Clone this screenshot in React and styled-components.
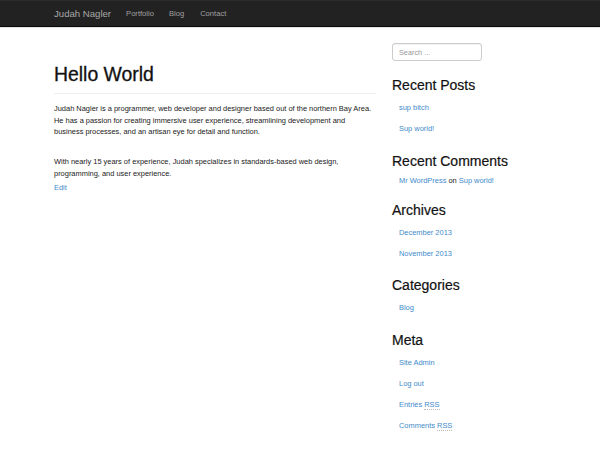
import React from "react";
import styled, { createGlobalStyle } from "styled-components";

const Global = createGlobalStyle`
  html, body { margin: 0; padding: 0; background: #fff; }
  body { font-family: "Liberation Sans", Arial, sans-serif; color: #333; }
  * { box-sizing: border-box; }
  a { color: #428bca; text-decoration: none; }
`;

const Navbar = styled.nav`
  height: 27px;
  background: #222;
  border-top: 1px solid #2c2c2c;
  border-bottom: 1px solid #0a0a0a;
  box-shadow: 0 1px 0 #e4e4e4;
`;

const NavInner = styled.div`
  width: 492px;
  margin: 0 auto;
  height: 100%;
  display: flex;
  align-items: center;
`;

const Brand = styled.a`
  font-size: 9.6px;
  margin-right: 15px;
  && { color: #a8a8a8; }
`;

const NavLink = styled.a`
  && { color: #a0a0a0; }
  font-size: 7.6px;
  margin-right: ${(p) => p.$mr}px;
`;

const Container = styled.div`
  width: 492px;
  margin: 0 auto;
  display: flex;
  gap: 16px;
`;

const Main = styled.main`
  width: 322px;
`;

const Header = styled.header`
  margin-top: 37px;
  padding-bottom: 8px;
  border-bottom: 1px solid #eee;
`;

const Title = styled.h1`
  margin: 0;
  font-size: 19.4px;
  line-height: 21px;
  font-weight: normal;
  color: #111;
  -webkit-text-stroke: 0.3px #111;
`;

const Para = styled.p`
  margin: ${(p) => p.$mt}px 0 0;
  font-size: 7.45px;
  line-height: 11.7px;
  color: #222;
`;

const EditLink = styled.a`
  display: block;
  margin-top: 2px;
  font-size: 7.45px;
  line-height: 11.7px;
`;

const Sidebar = styled.aside`
  width: 154px;
  padding-top: 16px;
`;

const Search = styled.input`
  display: block;
  width: 90px;
  height: 18px;
  border: 1px solid #ccc;
  border-radius: 3px;
  padding: 0 6px;
  font-family: "Liberation Sans", Arial, sans-serif;
  font-size: 7.3px;
  color: #555;
  box-shadow: inset 0 1px 1px rgba(0,0,0,0.06);
  &::placeholder { color: #999; }
`;

const WidgetTitle = styled.h3`
  margin: ${(p) => p.$mt}px 0 0;
  font-size: 14px;
  line-height: 16px;
  font-weight: normal;
  color: #111;
  -webkit-text-stroke: 0.2px #111;
`;

const List = styled.ul`
  list-style: none;
  margin: ${(p) => p.$mt}px 0 0;
  padding: 0 0 0 7px;
`;

const Item = styled.li`
  height: 21px;
  line-height: 21px;
  font-size: 7.45px;
  color: #222;
`;

const Abbr = styled.abbr`
  text-decoration: none;
  border-bottom: 1px dotted #bbb;
`;

const widgets = [
  { title: "Recent Posts", items: ["sup bitch", "Sup world!"] },
  {
    title: "Recent Comments",
    items: [
      <>
        <a href="#">Mr WordPress</a> on <a href="#">Sup world!</a>
      </>,
    ],
    tight: true,
  },
  { title: "Archives", items: ["December 2013", "November 2013"] },
  { title: "Categories", items: ["Blog"] },
  {
    title: "Meta",
    items: [
      "Site Admin",
      "Log out",
      <a href="#">Entries <Abbr>RSS</Abbr></a>,
      <a href="#">Comments <Abbr>RSS</Abbr></a>,
    ],
  },
];

export default function App() {
  return (
    <>
      <Global />
      <Navbar>
        <NavInner>
          <Brand href="#">Judah Nagler</Brand>
          <NavLink href="#" $mr={15}>Portfolio</NavLink>
          <NavLink href="#" $mr={16}>Blog</NavLink>
          <NavLink href="#" $mr={0}>Contact</NavLink>
        </NavInner>
      </Navbar>
      <Container>
        <Main>
          <Header>
            <Title>Hello World</Title>
          </Header>
          <Para $mt={9}>
            Judah Nagler is a programmer, web developer and designer based out of the northern Bay Area. He has a passion for creating immersive user experience, streamlining development and business processes, and an artisan eye for detail and function.
          </Para>
          <Para $mt={18}>
            With nearly 15 years of experience, Judah specializes in standards-based web design, programming, and user experience.
          </Para>
          <EditLink href="#">Edit</EditLink>
        </Main>
        <Sidebar>
          <Search placeholder="Search ..." />
          {widgets.map((w, i) => (
            <React.Fragment key={w.title}>
              <WidgetTitle $mt={i === 0 ? 16 : widgets[i - 1].tight ? 11 : 13.5}>{w.title}</WidgetTitle>
              <List $mt={w.tight ? 1 : 4}>
                {w.items.map((it, j) => (
                  <Item key={j}>{typeof it === "string" ? <a href="#">{it}</a> : it}</Item>
                ))}
              </List>
            </React.Fragment>
          ))}
        </Sidebar>
      </Container>
    </>
  );
}
